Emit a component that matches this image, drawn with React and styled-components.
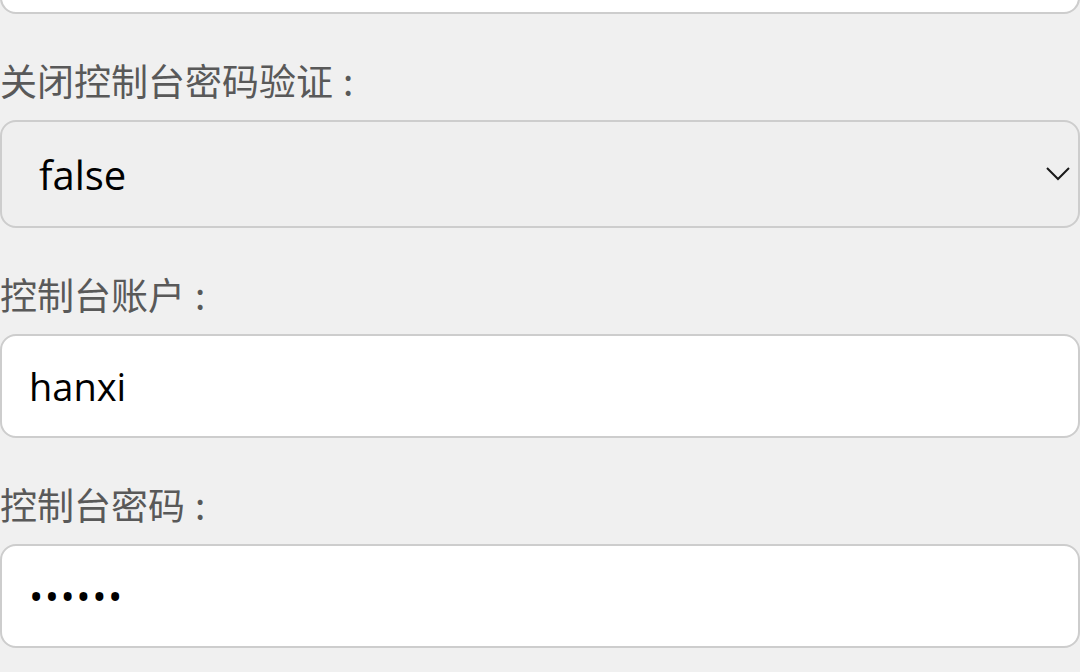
import React from 'react';
import styled, {createGlobalStyle} from "styled-components";

const GlobalStyle = createGlobalStyle`
    html, body {
        margin: 0;
        padding: 0;
        background: #f0f0f0;
        overflow: hidden;
    }
    body {
        font-family: "Open Sans", "Noto Sans CJK SC", sans-serif;
    }
`;

const fields = [
    {label: '控制台账户', value: 'hanxi', type: 'text'},
    {label: '控制台密码', value: '123456', type: 'password'},
];

export default function App() {
    return (
        <Form>
            <GlobalStyle/>
            <TopInput type="text" defaultValue="" readOnly/>

            <Label>关闭控制台密码验证<Colon>:</Colon></Label>
            <SelectWrap>
                <Select defaultValue="false">
                    <option value="false">false</option>
                    <option value="true">true</option>
                </Select>
                <Chevron width="24" height="14" viewBox="0 0 24 14">
                    <path d="M1 1 L12 12 L23 1" fill="none" stroke="#1a1a1a" strokeWidth="2"/>
                </Chevron>
            </SelectWrap>

            {fields.map((field, key) =>
                <React.Fragment key={key}>
                    <Label>{field.label}<Colon>:</Colon></Label>
                    <Input type={field.type} defaultValue={field.value} readOnly password={field.type === 'password'}/>
                </React.Fragment>
            )}
        </Form>
    )
}

// styles
const Form = styled.div`
    display: flex;
    flex-direction: column;
    width: 1080px;
`;

const Input = styled.input`
    box-sizing: border-box;
    width: 100%;
    height: 104px;
    margin: 0;
    padding: 0 0 0 27px;
    border: 2px solid #cdcdcd;
    border-radius: 16px;
    background: #ffffff;
    color: #000;
    font-family: "Open Sans", "Noto Sans CJK SC", sans-serif;
    font-size: 38px;
    letter-spacing: ${props => props.password ? '1.5px' : '0'};
    outline: none;
`;

const TopInput = styled(Input)`
    margin-top: -90px;
`;

const Label = styled.div`
    margin: 44px 0 18px 0;
    line-height: 44px;
    font-family: "Noto Sans CJK SC", sans-serif;
    font-size: 37px;
    color: #595959;
    white-space: nowrap;
`;

const Colon = styled.span`
    margin-left: 10px;
`;

const SelectWrap = styled.div`
    position: relative;
    width: 100%;
`;

const Select = styled.select`
    box-sizing: border-box;
    display: block;
    width: 100%;
    height: 108px;
    margin: 0;
    padding: 0 0 0 37px;
    border: 2px solid #cdcdcd;
    border-radius: 16px;
    background: #efefef;
    color: #000;
    font-family: "Open Sans", "Noto Sans CJK SC", sans-serif;
    font-size: 40px;
    appearance: none;
    -webkit-appearance: none;
    outline: none;
`;

const Chevron = styled.svg`
    position: absolute;
    right: 10px;
    top: 47px;
    pointer-events: none;
`;
